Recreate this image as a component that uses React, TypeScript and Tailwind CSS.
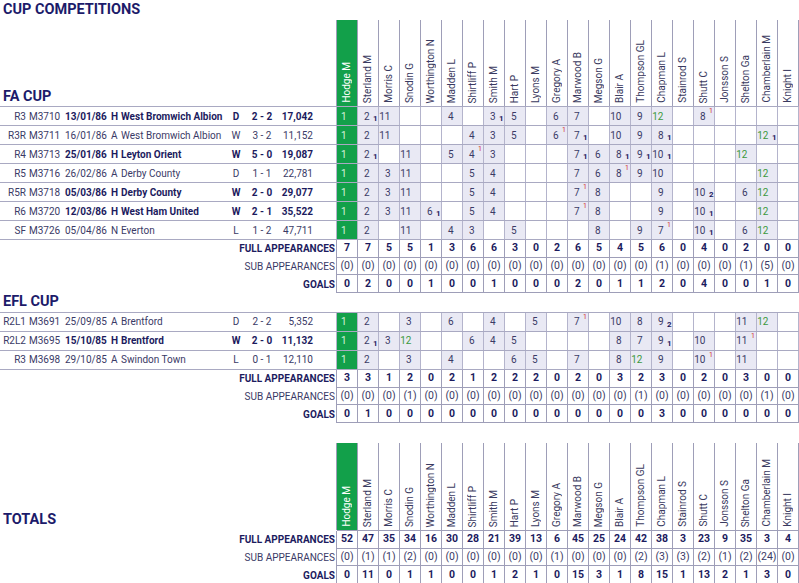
import React from "react";

const PLAYERS = [
  "Hodge M", "Sterland M", "Morris C", "Snodin G", "Worthington N", "Madden L", "Shirtliff P",
  "Smith M", "Hart P", "Lyons M", "Gregory A", "Marwood B", "Megson G", "Blair A",
  "Thompson GL", "Chapman L", "Stainrod S", "Shutt C", "Jonsson S", "Shelton Ga",
  "Chamberlain M", "Knight I",
];

type Match = {
  r: string; m: string; d: string; v: string; o: string; res: string; sc: string; att: string; b: boolean; cells: string[];
};

const FA: Match[] = [
  { r: "R3", m: "M3710", d: "13/01/86", v: "H", o: "West Bromwich Albion", res: "D", sc: "2 - 2", att: "17,042", b: true,
    cells: ["1","2g1","11","","","4","","3g1","5","","6","7","","10","9","12s","","8o","","","",""] },
  { r: "R3R", m: "M3711", d: "16/01/86", v: "A", o: "West Bromwich Albion", res: "W", sc: "3 - 2", att: "11,152", b: false,
    cells: ["1","2","11","","","","4","3","5","","6o","7g1","","10","9","8g1","","","","","12sg1",""] },
  { r: "R4", m: "M3713", d: "25/01/86", v: "H", o: "Leyton Orient", res: "W", sc: "5 - 0", att: "19,087", b: true,
    cells: ["1","2g1","","11","","5","4o","3","","","","7g1","6","8g1","9g1","10g1","","","","12s","",""] },
  { r: "R5", m: "M3716", d: "26/02/86", v: "A", o: "Derby County", res: "D", sc: "1 - 1", att: "22,781", b: false,
    cells: ["1","2","3","11","","","5","4","","","","7","6","8o","9","10","","","","","12s",""] },
  { r: "R5R", m: "M3718", d: "05/03/86", v: "H", o: "Derby County", res: "W", sc: "2 - 0", att: "29,077", b: true,
    cells: ["1","2","3","11","","","5","4","","","","7o","8","","","9","","10g2","","6","12s",""] },
  { r: "R6", m: "M3720", d: "12/03/86", v: "H", o: "West Ham United", res: "W", sc: "2 - 1", att: "35,522", b: true,
    cells: ["1","2","3","11","6g1","","5","4","","","","7o","8","","","9","","10g1","","","12s",""] },
  { r: "SF", m: "M3726", d: "05/04/86", v: "N", o: "Everton", res: "L", sc: "1 - 2", att: "47,711", b: false,
    cells: ["1","2","","11","","4","3","","5","","","","8","","9","7o","","10g1","","6","12s",""] },
];

const EFL: Match[] = [
  { r: "R2L1", m: "M3691", d: "25/09/85", v: "A", o: "Brentford", res: "D", sc: "2 - 2", att: "5,352", b: false,
    cells: ["1","2","","3","","6","","4","","5","","7o","","10","8","9g2","","","","11","12s",""] },
  { r: "R2L2", m: "M3695", d: "15/10/85", v: "H", o: "Brentford", res: "W", sc: "2 - 0", att: "11,132", b: true,
    cells: ["1","2g1","3","12s","","","6","4","5","","","","","8","7","9g1","","10","","11o","",""] },
  { r: "R3", m: "M3698", d: "29/10/85", v: "A", o: "Swindon Town", res: "L", sc: "0 - 1", att: "12,110", b: false,
    cells: ["1","2","","3","","4","","","6","5","","7","","8","12s","9","","10o","","11","",""] },
];

const FA_STATS = {
  full: ["7","7","5","5","1","3","6","6","3","0","2","6","5","4","5","6","0","4","0","2","0","0"],
  sub: ["(0)","(0)","(0)","(0)","(0)","(0)","(0)","(0)","(0)","(0)","(0)","(0)","(0)","(0)","(0)","(1)","(0)","(0)","(0)","(1)","(5)","(0)"],
  goals: ["0","2","0","0","1","0","0","1","0","0","0","2","0","1","1","2","0","4","0","0","1","0"],
};
const EFL_STATS = {
  full: ["3","3","1","2","0","2","1","2","2","2","0","2","0","3","2","3","0","2","0","3","0","0"],
  sub: ["(0)","(0)","(0)","(1)","(0)","(0)","(0)","(0)","(0)","(0)","(0)","(0)","(0)","(0)","(1)","(0)","(0)","(0)","(0)","(0)","(1)","(0)"],
  goals: ["0","1","0","0","0","0","0","0","0","0","0","0","0","0","0","3","0","0","0","0","0","0"],
};
const TOT_STATS = {
  full: ["52","47","35","34","16","30","28","21","39","13","6","45","25","24","42","38","3","23","9","35","3","4"],
  sub: ["(0)","(1)","(1)","(2)","(0)","(0)","(0)","(0)","(0)","(0)","(1)","(0)","(0)","(0)","(2)","(3)","(3)","(2)","(1)","(2)","(24)","(0)"],
  goals: ["0","11","0","1","1","0","0","1","2","1","0","15","3","1","8","15","1","13","2","1","3","0"],
};

function DataCell({ c, i }: { c: string; i: number }) {
  if (i === 0) {
    return (
      <div className="relative h-full border-r border-[#b4b4cc] bg-[#12a04a] flex items-center">
        <span className="w-[9.5px] text-right text-[#d6f3dc]">{c}</span>
      </div>
    );
  }
  if (!c) return <div className="h-full border-r border-[#b4b4cc]" />;
  const m = c.match(/^(\d+)(s?)(o?)(?:g(\d))?$/);
  const n = m ? m[1] : c;
  const sub = m ? m[2] === "s" : false;
  const off = m ? m[3] === "o" : false;
  const g = m ? m[4] : undefined;
  return (
    <div className="relative h-full border-r border-[#b4b4cc] bg-[#e9e9f4] flex items-center">
      <span className={"w-[11.5px] text-right " + (sub ? "text-[#3c9a3c]" : "text-[#3b3b66]")}>{n}</span>
      {off && <span className="absolute left-[15px] top-[1px] text-[7px] leading-none text-[#d22f2f]">1</span>}
      {g && <span className="absolute left-[15px] bottom-[2px] text-[8px] font-bold leading-none text-[#1c1b5e]">{g}</span>}
    </div>
  );
}

function MatchRow({ x }: { x: Match }) {
  const w = x.b ? "font-bold text-[#1c1b5e]" : "font-normal text-[#3a3a66]";
  return (
    <div className="flex h-[19px] border-b border-[#a9a9c2]">
      <div className="w-[337px] flex items-center text-[10px] whitespace-nowrap">
        <span className="w-[26px] text-right text-[#3a3a66]">{x.r}</span>
        <span className="w-[39px] pl-[3px] text-[#3a3a66]">{x.m}</span>
        <span className={"w-[46px] " + w}>{x.d}</span>
        <span className={"w-[10px] " + w}>{x.v}</span>
        <span className={"w-[104px] " + w}>{x.o}</span>
        <span className={"w-[22px] text-center " + w}>{x.res}</span>
        <span className={"w-[30px] text-center " + w}>{x.sc}</span>
        <span className={"w-[36px] text-right " + w}>{x.att}</span>
      </div>
      <div className="grid grid-cols-[repeat(22,21px)] h-full border-l border-[#b4b4cc] text-[10px]">
        {x.cells.map((c, i) => (
          <DataCell key={i} c={c} i={i} />
        ))}
      </div>
    </div>
  );
}

function StatRow({ label, vals, bold }: { label: string; vals: string[]; bold: boolean }) {
  return (
    <div className="flex h-[17.67px]">
      <div
        className={
          "w-[337px] flex items-center justify-end pr-[1px] text-[10px] " +
          (bold ? "font-bold text-[#1c1b5e]" : "font-normal text-[#3a3a66]")
        }
      >
        {label}
      </div>
      <div className="grid grid-cols-[repeat(22,21px)] h-full border-l border-b border-[#9e9eb8]">
        {vals.map((v, i) => (
          <div
            key={i}
            className={
              "h-full border-r border-[#9e9eb8] flex items-center justify-center text-[10.5px] " +
              (bold ? "font-bold text-[#1c1b5e]" : "font-normal text-[#3a3a66]")
            }
          >
            {v}
          </div>
        ))}
      </div>
    </div>
  );
}

function Stats({ s }: { s: { full: string[]; sub: string[]; goals: string[] } }) {
  return (
    <div>
      <StatRow label="FULL APPEARANCES" vals={s.full} bold />
      <StatRow label="SUB APPEARANCES" vals={s.sub} bold={false} />
      <StatRow label="GOALS" vals={s.goals} bold />
    </div>
  );
}

function Header({ title, h, pb }: { title: string; h: string; pb: string }) {
  return (
    <div className={"flex " + h}>
      <div className={"w-[337px] flex items-end pl-[3px] " + pb}>
        <span className="text-[14.5px] font-bold leading-none text-[#1c1b6a]">{title}</span>
      </div>
      <div className="grid grid-cols-[repeat(22,21px)] h-full border-l border-[#9e9eb8]">
        {PLAYERS.map((p, i) => (
          <div
            key={p}
            className={
              "h-full border-r border-[#9e9eb8] flex flex-col items-center justify-end pb-[3px] " +
              (i === 0 ? "bg-[#12a04a] text-white" : "text-[#3a3a60]")
            }
          >
            <span className="[writing-mode:vertical-rl] rotate-180 whitespace-nowrap text-[10px] leading-none">{p}</span>
          </div>
        ))}
      </div>
    </div>
  );
}

export default function App() {
  return (
    <div
      className="w-[799px] h-[583px] overflow-hidden bg-white"
      style={{ fontFamily: "Roboto, 'Liberation Sans', sans-serif" }}
    >
      <div className="h-[20px] flex items-center pl-[3px]">
        <span className="text-[14.5px] font-bold leading-none text-[#1c1b6a]">CUP COMPETITIONS</span>
      </div>
      <Header title="FA CUP" h="h-[86px]" pb="pb-[2px]" />
      <div className="border-t border-[#a9a9c2]">
        {FA.map((x) => (
          <MatchRow key={x.m} x={x} />
        ))}
      </div>
      <Stats s={FA_STATS} />
      <div className="h-[19px] flex items-center pl-[3px]">
        <span className="text-[14.5px] font-bold leading-none text-[#1c1b6a]">EFL CUP</span>
      </div>
      <div className="border-t border-[#a9a9c2]">
        {EFL.map((x) => (
          <MatchRow key={x.m} x={x} />
        ))}
      </div>
      <Stats s={EFL_STATS} />
      <div className="h-[20px]" />
      <Header title="TOTALS" h="h-[87px]" pb="pb-[2px]" />
      <div className="border-t border-[#9e9eb8] ml-[337px] w-[462px]" />
      <Stats s={TOT_STATS} />
    </div>
  );
}
